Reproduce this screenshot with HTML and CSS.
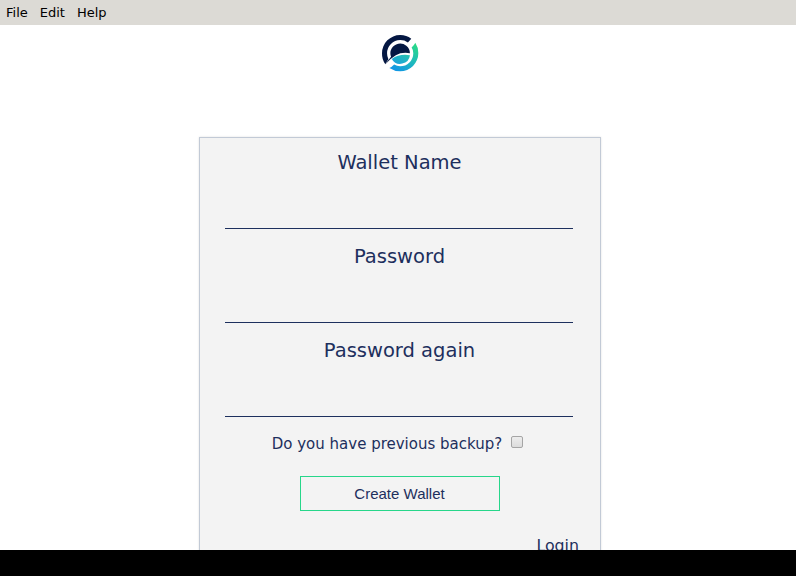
FILE: index.html
```html
<!DOCTYPE html>
<html lang="en">
<head>
<meta charset="utf-8">
<title>Wallet</title>
<link rel="stylesheet" href="styles.css">
</head>
<body>
<nav class="menubar"><span>File</span><span>Edit</span><span>Help</span></nav>
<main class="content">
  <svg class="logo" viewBox="15 17 113 113" aria-hidden="true">
    <defs>
      <linearGradient id="ring" x1="0.9" y1="0" x2="0.3" y2="1">
        <stop offset="0" stop-color="#2bdc82"/>
        <stop offset="0.5" stop-color="#20bdb8"/>
        <stop offset="1" stop-color="#1097e4"/>
      </linearGradient>
      <linearGradient id="drop" x1="1" y1="0" x2="0" y2="1">
        <stop offset="0" stop-color="#27c3ae"/>
        <stop offset="1" stop-color="#179fe0"/>
      </linearGradient>
    </defs>
    <path fill="#041742" d="M28 107A54 54 0 0 1 18 74A54 54 0 0 1 72 20A54 54 0 0 1 105 31L95 42A39 39 0 0 0 72 35A39 39 0 0 0 33 74Q33 84 37 92Q32 99 28 107Z"/>
    <path fill="url(#ring)" d="M117 43A54 54 0 0 1 126 74A54 54 0 0 1 72 128Q55 128 40 118Q47 116 54 108A39 39 0 0 0 72 113A39 39 0 0 0 111 74Q111 64 106 57Q114 50 117 43Z"/>
    <path fill="#041742" d="M28 107Q36 95 45 85A29 29 0 1 1 101 74Q77 70 59 80Q42 90 28 107Z"/>
    <path fill="url(#drop)" d="M47 91Q70 75 101 80A29 29 0 0 1 47 91Z"/>
  </svg>
  <form class="card">
    <label class="field"><span>Wallet Name</span><input type="text"></label>
    <label class="field"><span>Password</span><input type="password"></label>
    <label class="field"><span>Password again</span><input type="password"></label>
    <label class="backup">Do you have previous backup?<input type="checkbox"></label>
    <button class="create" type="button">Create Wallet</button>
    <a class="login">Login</a>
  </form>
</main>
<footer class="bottom"></footer>
</body>
</html>
```
FILE: styles.css
```css
* { box-sizing: border-box; }
body {
  display: flex;
  flex-direction: column;
  height: 576px;
  margin: 0;
  overflow: hidden;
  background: #fff;
  color: #1d2f5d;
  font-family: "DejaVu Sans", sans-serif;
}
.menubar {
  display: flex;
  flex: 0 0 25px;
  gap: 12px;
  padding-left: 6px;
  background: #dcdad5;
  color: #000;
  font-size: 13px;
  line-height: 25px;
}
.content {
  display: flex;
  flex: 1;
  flex-direction: column;
  align-items: center;
  min-height: 0;
  padding: 9px 0 0 4px;
  overflow: hidden;
}
.logo { flex: none; width: 38px; height: 38px; }
.card {
  display: flex;
  flex: none;
  flex-direction: column;
  align-items: center;
  width: 402px;
  height: 480px;
  margin-top: 65px;
  padding: 0 20px 0 18px;
  border: 1px solid #c2cad6;
  background: #f3f3f3;
  box-shadow: 0 0 2px rgba(0, 0, 0, 0.12);
}
.field {
  display: flex;
  flex-direction: column;
  height: 94px;
  width: 348px;
  padding-top: 11px;
  font-size: 19.500px;
  line-height: 28px;
  text-align: center;
}
.field span { padding-left: 1px; }
.field input {
  width: 100%;
  height: 52px;
  padding: 0;
  border: 0;
  border-bottom: 1px solid #1d2f5d;
  outline: 0;
  background: transparent;
}
.backup {
  display: flex;
  align-items: center;
  gap: 9px;
  margin: 13px 3px 0 0;
  font-size: 15px;
  line-height: 22px;
}
.backup input {
  appearance: none;
  width: 12px;
  height: 12px;
  margin: 0 0 5px;
  border: 1px solid #a5a5a5;
  border-radius: 2px;
  background: linear-gradient(#ededed, #dcdcdc);
}
.create {
  width: 200px;
  height: 35px;
  margin: 21px 0 0 2px;
  padding: 0 1px 0 0;
  border: 1px solid #26d68a;
  background: transparent;
  color: #1d2f5d;
  font: 15px "Liberation Sans", sans-serif;
}
.login {
  align-self: flex-end;
  margin: 24px 1px 0 0;
  font-size: 15.800px;
  line-height: 22px;
}
.bottom { flex: 0 0 26px; background: #000; }
```
